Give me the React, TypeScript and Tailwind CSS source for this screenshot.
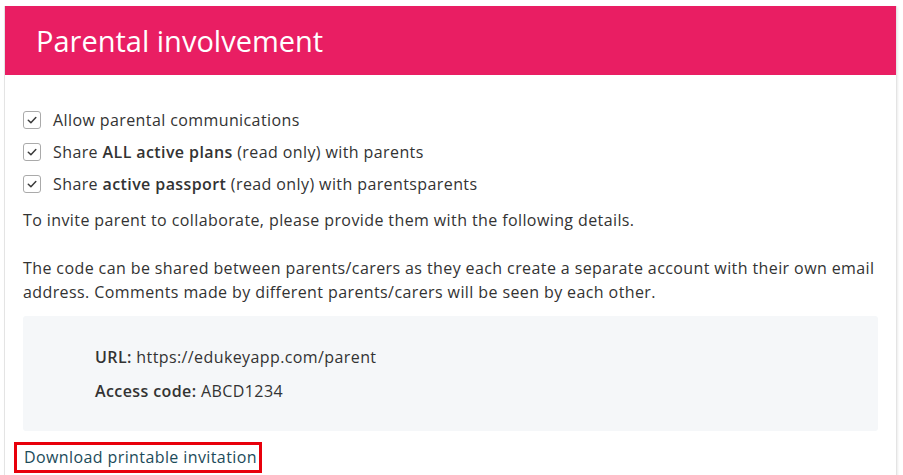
// Parental involvement settings card

function CheckBox() {
  return (
    <span className="flex h-[18px] w-[18px] shrink-0 items-center justify-center rounded-[3px] border border-[#aaa] bg-white">
      <svg viewBox="0 0 12 12" className="h-[12px] w-[12px]" fill="none" stroke="#3a3a3a" strokeWidth="1.5" strokeLinecap="round" strokeLinejoin="round">
        <path d="M2.3 6.2 4.9 8.7 9.8 3.5" />
      </svg>
    </span>
  )
}

function CheckRow({ children }: { children: React.ReactNode }) {
  return (
    <label className="flex h-8 items-center gap-[12px]">
      <CheckBox />
      <span>{children}</span>
    </label>
  )
}

export default function App() {
  return (
    <div
      className="min-h-[475px] bg-white pl-[4px] pr-[6px] pt-[6px] text-[16px] leading-6 tracking-[0.4px] text-[#333]"
      style={{ fontFamily: '"Open Sans", "Noto Sans", sans-serif' }}
    >
      <div className="border border-t-0 border-[#e4e4e4] bg-white shadow-[1px_1px_2px_rgba(0,0,0,0.08)]">
        {/* Header */}
        <div className="flex h-[69px] items-center bg-[#e91e63] pl-[31px]">
          <h1 className="text-[29px] font-normal leading-none tracking-normal text-white">Parental involvement</h1>
        </div>

        {/* Body */}
        <div className="px-[18px] pt-[29px] pb-6">
          <div className="flex flex-col">
            <CheckRow>Allow parental communications</CheckRow>
            <CheckRow>
              Share <b className="font-semibold">ALL active plans</b> (read only) with parents
            </CheckRow>
            <CheckRow>
              Share <b className="font-semibold">active passport</b> (read only) with parentsparents
            </CheckRow>
          </div>

          <p className="mt-2">To invite parent to collaborate, please provide them with the following details.</p>
          <p className="mt-6">
            The code can be shared between parents/carers as they each create a separate account with their own email
            address. Comments made by different parents/carers will be seen by each other.
          </p>

          <div className="mt-3 flex h-[115px] flex-col gap-[10px] rounded-[3px] bg-[#f5f7f9] pl-[72px] pt-[29px]">
            <div>
              <span className="font-semibold">URL:</span> https://edukeyapp.com/parent
            </div>
            <div>
              <span className="font-semibold">Access code:</span> ABCD1234
            </div>
          </div>

          <a
            href="#"
            className="-ml-[9px] mt-[11px] inline-block border-[3px] border-[#e8000b] pl-[7px] pr-[2px] leading-[25px] text-[#1c4b5a]"
          >
            Download printable invitation
          </a>
        </div>
      </div>
    </div>
  )
}
